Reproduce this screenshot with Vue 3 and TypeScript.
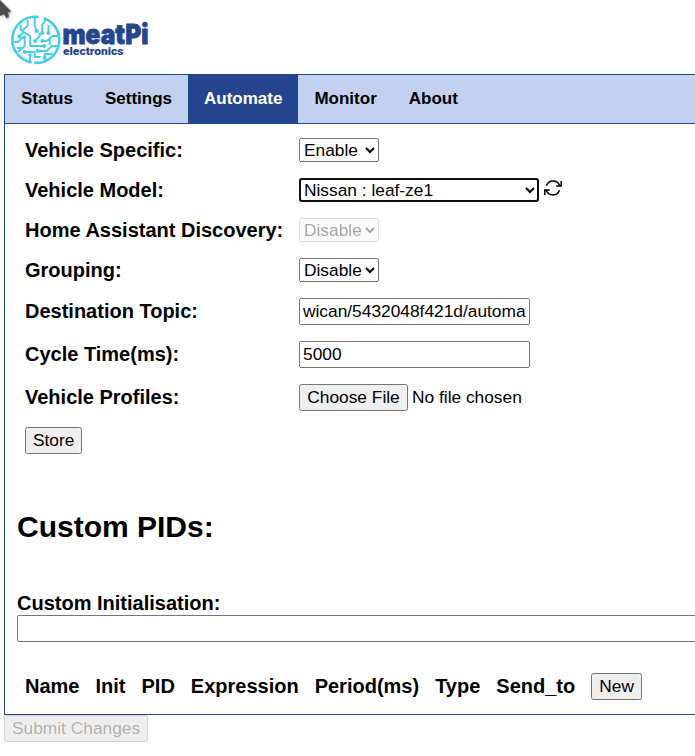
<script setup lang="ts">
import { ref } from 'vue'

const tabs: string[] = ['Status', 'Settings', 'Automate', 'Monitor', 'About']
const activeTab = ref<string>('Automate')
const columns: string[] = ['Name', 'Init', 'PID', 'Expression', 'Period(ms)', 'Type', 'Send_to']

const vehicleSpecific = ref<string>('Enable')
const discovery = ref<string>('Disable')
const grouping = ref<string>('Disable')
const topic = ref<string>('wican/5432048f421d/automate')
const cycleTime = ref<string>('5000')
const customInit = ref<string>('')
</script>

<template>
  <div class="page">
    <svg class="pointer" width="14" height="20" viewBox="0 0 14 20" aria-hidden="true">
      <path d="M-2 -2 11 11.3 7.7 12.5 9 16 6.4 18.5 4.2 14.1 -2 17Z" fill="#4b4b4b" />
    </svg>
    <header class="brand">
      <svg width="160" height="56" viewBox="6 12 160 56" role="img" aria-label="meatPi electronics">
        <g transform="translate(.7 0)">
          <g fill="none" stroke="#43cfe9" stroke-width="1.9" stroke-linejoin="round">
            <path stroke-width="2.6" d="M38 17.1A22.9 22.9 0 1 0 31 62.4M43 18.3A22.9 22.9 0 0 1 33.5 62.8" />
            <path d="M20 25V30L29.5 36V46H43M27 20V26L22 30M34 17V26L36 31M41.5 33V25L45 20M47.7 33V25M58 36H52L46 41H41.7M34.3 41L39 36V33M13 42H17L24 36V46L17 52M18.7 36.7L23 32M16 48H23M24 52H34V57H40M29.3 55V62M37 51H46L51 46H57M44 58V54H52M49 39V45" />
          </g>
          <g fill="#43cfe9">
            <circle cx="36" cy="31" r="2.1" /><circle cx="18.7" cy="36.7" r="2.1" /><circle cx="34.3" cy="41" r="2" />
            <circle cx="41.5" cy="33" r="2" /><circle cx="47.7" cy="33" r="2" /><circle cx="41.7" cy="41" r="2" />
            <circle cx="43.5" cy="46" r="2" /><circle cx="24" cy="52" r="2" /><circle cx="37" cy="51" r="2" />
            <circle cx="29.3" cy="55" r="1.8" /><circle cx="44" cy="58" r="2" />
          </g>
        </g>
        <text class="brand-name" x="62.5" y="44.3" textLength="86" lengthAdjust="spacingAndGlyphs">meatPi</text>
        <text class="brand-sub" x="63" y="55" textLength="60.5" lengthAdjust="spacingAndGlyphs">electronics</text>
      </svg>
    </header>

    <nav class="tabs">
      <button
        v-for="tab in tabs"
        :key="tab"
        class="tab"
        :class="{ active: tab === activeTab }"
        @click="activeTab = tab"
      >{{ tab }}</button>
    </nav>

    <main class="panel">
      <div class="settings">
        <div class="row">
          <label>Vehicle Specific:</label>
          <select v-model="vehicleSpecific" class="short"><option>Enable</option><option>Disable</option></select>
        </div>
        <div class="row">
          <label>Vehicle Model:</label>
          <select class="model"><option>Nissan : leaf-ze1</option></select>
          <svg class="refresh" width="18" height="18" viewBox="0 0 18 18" fill="none" stroke="#000" stroke-width="1.5">
            <path d="M2.5 6.7A7 7 0 0 1 15.7 6.7M17.2 2V6.9H12.2M15.5 11.3A7 7 0 0 1 2.3 11.3M.8 16V11.1H5.8" />
          </svg>
        </div>
        <div class="row">
          <label>Home Assistant Discovery:</label>
          <select v-model="discovery" class="short" disabled><option>Enable</option><option>Disable</option></select>
        </div>
        <div class="row">
          <label>Grouping:</label>
          <select v-model="grouping" class="short"><option>Enable</option><option>Disable</option></select>
        </div>
        <div class="row tall">
          <label>Destination Topic:</label>
          <input v-model="topic" class="field" type="text" />
        </div>
        <div class="row tall">
          <label>Cycle Time(ms):</label>
          <input v-model="cycleTime" class="field" type="text" />
        </div>
        <div class="row tall">
          <label>Vehicle Profiles:</label>
          <input class="file" type="file" />
        </div>
        <div class="row tall"><button class="btn">Store</button></div>
      </div>

      <h2>Custom PIDs:</h2>

      <div class="init">
        <label>Custom Initialisation:</label>
        <input v-model="customInit" class="wide" type="text" />
      </div>

      <div class="pids">
        <span v-for="column in columns" :key="column">{{ column }}</span>
        <button class="btn">New</button>
      </div>
    </main>
    <button class="btn" disabled>Submit Changes</button>
  </div>
</template>

<style>
html,
body {
  background: #fff;
  overflow: hidden;
}
</style>

<style scoped>
.page {
  position: relative;
  box-sizing: border-box;
  width: 100%;
  height: 756px;
  padding-left: 4px;
  overflow: hidden;
  color: #000;
  font-family: "Liberation Sans", Arial, sans-serif;
  font-size: 20px;
}
.page button,
.page input,
.page select {
  box-sizing: border-box;
  margin: 0;
  font-family: inherit;
  font-size: 17.3333px;
}
.pointer {
  position: absolute;
  left: 0;
  top: 0;
  filter: drop-shadow(1px 1px 1px #999);
}
.brand {
  box-sizing: border-box;
  height: 74px;
  padding: 12px 0 0 2px;
}
.brand svg {
  display: block;
}
.brand-name,
.brand-sub {
  fill: #25468e;
  font-weight: 900;
}
.brand-name {
  font-family: Inter, sans-serif;
  font-size: 27.5px;
  stroke: #25468e;
  stroke-width: 0.8;
}
.brand-sub {
  font-family: Roboto, sans-serif;
  font-size: 11.5px;
}
.tabs {
  display: flex;
  box-sizing: border-box;
  width: 800px;
  height: 50px;
  border: 1px solid #25468e;
  background: #c2d1ef;
}
.page .tab {
  padding: 0 16px;
  border: 0;
  background: none;
  color: #000;
  font-size: 17px;
  font-weight: bold;
}
.page .tab.active {
  background: #25468e;
  color: #fff;
}
.panel {
  box-sizing: border-box;
  width: 800px;
  height: 591px;
  padding: 6px 12px;
  border: 1px solid #25468e;
  border-top: 0;
}
.settings {
  padding: 0 8px;
}
.row {
  display: flex;
  align-items: center;
  height: 40px;
}
.row.tall {
  height: 43px;
}
.row label {
  width: 274px;
  flex: none;
  font-weight: bold;
}
.short {
  width: 80px;
  height: 24px;
}
.model {
  width: 240px;
  height: 24px;
  background-color: #fff;
  outline: 2px solid #101010;
  outline-offset: -2px;
  border-radius: 3px;
}
.refresh {
  margin: 0 0 4px 5px;
}
.field {
  width: 231px;
  height: 27px;
}
.file {
  height: 27px;
}
.file::file-selector-button {
  box-sizing: border-box;
  width: 109px;
}
.btn {
  height: 27px;
}
h2 {
  margin: 47px 0 0;
  font-size: 30px;
  line-height: 36px;
}
.init {
  display: flex;
  flex-direction: column;
  margin-top: 46px;
  font-weight: bold;
  line-height: 24px;
}
.wide {
  width: 760px;
  height: 27px;
}
.pids {
  display: flex;
  align-items: center;
  gap: 16px;
  height: 43px;
  margin-top: 23px;
  padding: 0 8px;
  font-weight: bold;
}
</style>
